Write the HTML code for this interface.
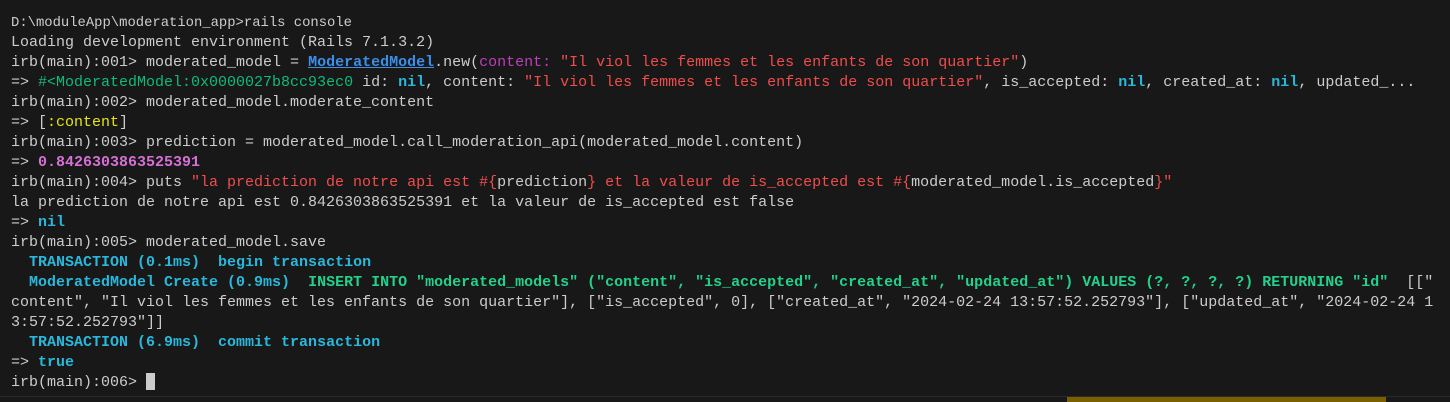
<!DOCTYPE html>
<html><head><meta charset="utf-8"><style>
html,body{margin:0;padding:0;background:#181818;width:1450px;height:402px;overflow:hidden}
#t{position:absolute;left:11px;top:13px;font-family:"Liberation Mono",monospace;font-size:15px;line-height:20px;color:#cccccc;white-space:pre}
.f{font-size:13.87px}
.g{color:#0dbc79}.G{color:#23d18b;font-weight:bold}.c{color:#29b8db;font-weight:bold}.r{color:#f14c4c}.y{color:#e5e510}.p{color:#d670d6;font-weight:bold}.m{color:#bc3fbc}.u{color:#3b8eea;font-weight:bold;text-decoration:underline}
.cur{display:inline-block;width:9px;height:17px;background:#cccccc;vertical-align:-4px}
#bar{position:absolute;left:0;top:396px;width:1450px;height:1px;background:#2b2b2b}
#y{position:absolute;left:1067px;top:397px;width:319px;height:5px;background:#7a6000}
</style></head><body>
<div id="t"><span class="f">D:\moduleApp\moderation_app&gt;rails console</span>
Loading development environment (Rails 7.1.3.2)
irb(main):001&gt; moderated_model = <span class="u">ModeratedModel</span>.new(<span class="m">content:</span> <span class="r">"Il viol les femmes et les enfants de son quartier"</span>)
=&gt; <span class="g">#&lt;ModeratedModel:0x0000027b8cc93ec0</span> id: <span class="c">nil</span>, content: <span class="r">"Il viol les femmes et les enfants de son quartier"</span>, is_accepted: <span class="c">nil</span>, created_at: <span class="c">nil</span>, updated_...
irb(main):002&gt; moderated_model.moderate_content
=&gt; [<span class="y">:content</span>]
irb(main):003&gt; prediction = moderated_model.call_moderation_api(moderated_model.content)
=&gt; <span class="p">0.8426303863525391</span>
irb(main):004&gt; puts <span class="r">"la prediction de notre api est #{</span>prediction<span class="r">} et la valeur de is_accepted est #{</span>moderated_model.is_accepted<span class="r">}"</span>
la prediction de notre api est 0.8426303863525391 et la valeur de is_accepted est false
=&gt; <span class="c">nil</span>
irb(main):005&gt; moderated_model.save
  <span class="c">TRANSACTION (0.1ms)  begin transaction</span>
  <span class="c">ModeratedModel Create (0.9ms)</span>  <span class="G">INSERT INTO "moderated_models" ("content", "is_accepted", "created_at", "updated_at") VALUES (?, ?, ?, ?) RETURNING "id"</span>  [["
content", "Il viol les femmes et les enfants de son quartier"], ["is_accepted", 0], ["created_at", "2024-02-24 13:57:52.252793"], ["updated_at", "2024-02-24 1
3:57:52.252793"]]
  <span class="c">TRANSACTION (6.9ms)  commit transaction</span>
=&gt; <span class="c">true</span>
irb(main):006&gt; <span class="cur"></span></div>
<div id="bar"></div><div id="y"></div>
</body></html>
